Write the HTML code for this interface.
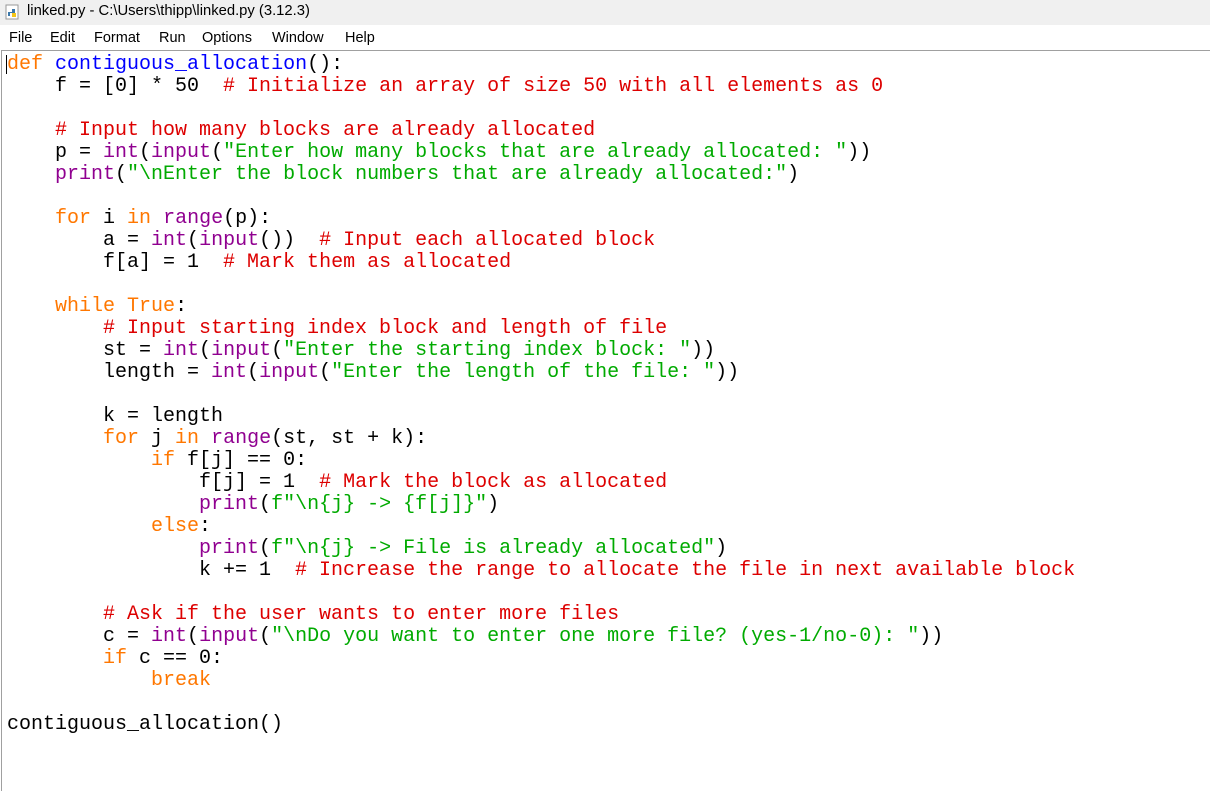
<!DOCTYPE html>
<html><head><meta charset="utf-8"><style>
body{margin:0;width:1210px;height:791px;overflow:hidden;background:#fff;font-family:"Liberation Sans",sans-serif;position:relative}
#title{position:absolute;left:0;top:0;width:1210px;height:25px;background:#f0f0f0;font-size:14.8px;color:#000}
#title span{position:absolute;left:27px;top:3px}
#icon{position:absolute;left:5px;top:4px;width:14px;height:16px}
#menu{position:absolute;left:0;top:25px;width:1210px;height:25px;background:#fff;font-size:14.5px}
#menu span{position:absolute;top:5px}
#ed{position:absolute;left:1px;top:50px;width:1209px;height:741px;border-top:1px solid #a0a0a0;border-left:1px solid #a0a0a0;box-sizing:border-box}
pre{position:absolute;left:7px;top:54px;margin:0;font-family:"Liberation Mono",monospace;font-size:20px;line-height:22px;color:#000}
.k{color:#ff7700}.d{color:#0000ff}.c{color:#dd0000}.s{color:#00aa00}.b{color:#900090}
#cur{position:absolute;left:6px;top:55px;width:1px;height:19px;background:#000}
</style></head><body>
<div id="title"><svg id="icon" viewBox="0 0 14 16"><rect x="1" y="1" width="12" height="14" fill="#fff" stroke="#999"/><path d="M3 8h4v-3h3v4H5v3H3z" fill="#3c78aa"/><path d="M7 9h4v4H7z" fill="#f5c518"/></svg><span>linked.py - C:\Users\thipp\linked.py (3.12.3)</span></div>
<div id="menu"><span style="left:9px">File</span><span style="left:50px">Edit</span><span style="left:94px">Format</span><span style="left:159px">Run</span><span style="left:202px">Options</span><span style="left:272px">Window</span><span style="left:345px">Help</span></div>
<div id="ed"></div>
<div id="cur"></div>
<pre><span class="k">def</span> <span class="d">contiguous_allocation</span>():
    f = [0] * 50  <span class="c"># Initialize an array of size 50 with all elements as 0</span>

    <span class="c"># Input how many blocks are already allocated</span>
    p = <span class="b">int</span>(<span class="b">input</span>(<span class="s">"Enter how many blocks that are already allocated: "</span>))
    <span class="b">print</span>(<span class="s">"\nEnter the block numbers that are already allocated:"</span>)

    <span class="k">for</span> i <span class="k">in</span> <span class="b">range</span>(p):
        a = <span class="b">int</span>(<span class="b">input</span>())  <span class="c"># Input each allocated block</span>
        f[a] = 1  <span class="c"># Mark them as allocated</span>

    <span class="k">while</span> <span class="k">True</span>:
        <span class="c"># Input starting index block and length of file</span>
        st = <span class="b">int</span>(<span class="b">input</span>(<span class="s">"Enter the starting index block: "</span>))
        length = <span class="b">int</span>(<span class="b">input</span>(<span class="s">"Enter the length of the file: "</span>))

        k = length
        <span class="k">for</span> j <span class="k">in</span> <span class="b">range</span>(st, st + k):
            <span class="k">if</span> f[j] == 0:
                f[j] = 1  <span class="c"># Mark the block as allocated</span>
                <span class="b">print</span>(<span class="s">f"\n{j} -&gt; {f[j]}"</span>)
            <span class="k">else</span>:
                <span class="b">print</span>(<span class="s">f"\n{j} -&gt; File is already allocated"</span>)
                k += 1  <span class="c"># Increase the range to allocate the file in next available block</span>

        <span class="c"># Ask if the user wants to enter more files</span>
        c = <span class="b">int</span>(<span class="b">input</span>(<span class="s">"\nDo you want to enter one more file? (yes-1/no-0): "</span>))
        <span class="k">if</span> c == 0:
            <span class="k">break</span>

contiguous_allocation()</pre>
</body></html>
